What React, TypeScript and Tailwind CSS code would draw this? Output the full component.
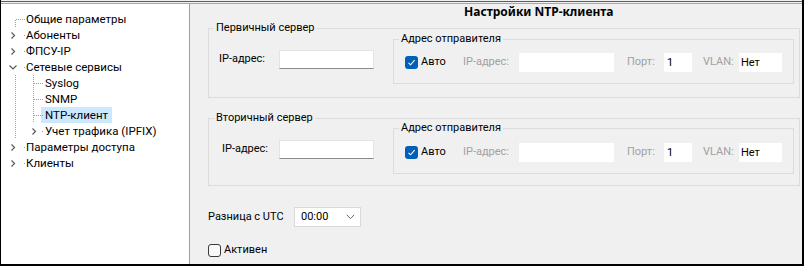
import React from "react";

const treeItems = [
  { label: "Общие параметры", level: 0 },
  { label: "Абоненты", level: 0 },
  { label: "ФПСУ-IP", level: 0 },
  { label: "Сетевые сервисы", level: 0 },
  { label: "Syslog", level: 1 },
  { label: "SNMP", level: 1 },
  { label: "NTP-клиент", level: 1, selected: true },
  { label: "Учет трафика (IPFIX)", level: 1 },
  { label: "Параметры доступа", level: 0 },
  { label: "Клиенты", level: 0 },
];

function TreeLines() {
  // drawn in page coordinates thanks to the viewBox offset
  const closed = [35, 51, 147, 163];
  return (
    <svg
      className="pointer-events-none absolute left-0 top-0"
      width="188"
      height="260"
      viewBox="1 4 188 260"
      shapeRendering="crispEdges"
    >
      <g stroke="#a0a0a0" strokeWidth="1" strokeDasharray="1 1">
        <line x1="15.5" y1="20" x2="15.5" y2="28" />
        <line x1="15.5" y1="75" x2="15.5" y2="139" />
        <line x1="16" y1="19.5" x2="25" y2="19.5" />
        <line x1="33.5" y1="75" x2="33.5" y2="123" />
        <line x1="34" y1="83.5" x2="44" y2="83.5" />
        <line x1="34" y1="99.5" x2="44" y2="99.5" />
        <line x1="34" y1="115.5" x2="44" y2="115.5" />
      </g>
      <g fill="#a0a0a0">
        {closed.concat([67]).map((y) => (
          <rect key={y} x="24" y={y} width="1" height="1" />
        ))}
        <rect x="42" y="131" width="1" height="1" />
      </g>
      <g fill="none" stroke="#5a5a5a" strokeWidth="1.2" shapeRendering="geometricPrecision">
        {closed.map((y) => (
          <path key={y} d={`M11.5 ${y - 2.5} L14.5 ${y + 0.5} L11.5 ${y + 3.5}`} />
        ))}
        <path d="M9.5 65.5 L13 69 L16.5 65.5" />
        <path d="M32.5 128.5 L35.5 131.5 L32.5 134.5" />
      </g>
    </svg>
  );
}

function BlueCheck() {
  return (
    <span className="flex h-[13px] w-[13px] shrink-0 items-center justify-center rounded-[3px] bg-[#005fb8]">
      <svg width="9" height="9" viewBox="0 0 9 9" fill="none">
        <path d="M1.5 4.8 L3.6 6.8 L7.6 2.2" stroke="#fff" strokeWidth="1.1" />
      </svg>
    </span>
  );
}

function SenderGroup({ top, rowTop }: { top: string; rowTop: string }) {
  return (
    <fieldset className={`ml-[19px] flex-1 border border-[#dcdcdc] ${top}`}>
      <legend className="ml-[5px] px-[2px] leading-4">Адрес отправителя</legend>
      <div className={`flex h-[19px] items-center pl-[11px] mb-[11px] ${rowTop}`}>
        <BlueCheck />
        <span className="ml-[3px] w-[42px]">Авто</span>
        <span className="w-[56px] text-[#a0a0a0]">IP-адрес:</span>
        <input readOnly className="h-[19px] w-[95px] bg-white outline-none" />
        <span className="ml-[13px] w-[37px] text-[#a0a0a0]">Порт:</span>
        <input readOnly defaultValue="1" className="h-[19px] w-[28px] bg-white pl-[3px] outline-none" />
        <span className="ml-[11px] w-[36px] text-[#a0a0a0]">VLAN:</span>
        <input readOnly defaultValue="Нет" className="h-[19px] w-[43px] bg-white pl-[2px] outline-none" />
      </div>
    </fieldset>
  );
}

function ServerGroup(props: {
  title: string;
  labelCls: string;
  innerTop: string;
  rowTop: string;
  bottom: string;
  cls?: string;
}) {
  return (
    <fieldset className={`min-w-0 border border-[#dcdcdc] ${props.cls ?? ""}`}>
      <legend className="ml-[5px] px-[2px] leading-4">{props.title}</legend>
      <div className={`flex items-start pl-[10px] pr-[5px] ${props.bottom}`}>
        <div className="mt-[14px] flex items-center">
          <span className={props.labelCls}>IP-адрес:</span>
          <input
            readOnly
            className="h-[19px] w-[95px] border border-[#e3e3e3] border-b-[#8a8a8a] bg-white outline-none"
          />
        </div>
        <SenderGroup top={props.innerTop} rowTop={props.rowTop} />
      </div>
    </fieldset>
  );
}

export default function App() {
  return (
    <div className="flex h-[266px] w-[804px] flex-col border-b-2 border-l border-r-2 border-black bg-[#f0f0f0] font-['Roboto',sans-serif] text-[11px] text-black">
      <div className="h-px" />
      <div className="h-px bg-[#5c5c5c]" />
      <div className="h-px" />
      <div className="h-px bg-[#a8a8a8]" />
      <div className="flex h-[260px]">
        <div className="relative w-[189px] shrink-0 border-r border-[#a0a0a0] bg-white pt-[7px] text-[11.5px]">
          <TreeLines />
          {treeItems.map((it) => (
            <div key={it.label} className={`flex h-4 items-center ${it.level === 0 ? "pl-[21px]" : "pl-[40px]"}`}>
              <span className={`px-1 leading-4 ${it.selected ? "bg-[#cce8ff]" : ""}`}>{it.label}</span>
            </div>
          ))}
        </div>
        <div className="flex flex-1 flex-col pl-[18px] pr-[2px]">
          <div className="h-4 pl-[256px] font-['Noto_Sans',sans-serif] text-[12px] font-bold leading-4">
            Настройки NTP-клиента
          </div>
          <ServerGroup
            title="Первичный сервер"
            labelCls="w-[60px]"
            innerTop="-mt-[5px]"
            rowTop="mt-[6px]"
            bottom="pb-[13px]"
          />
          <ServerGroup
            title="Вторичный сервер"
            labelCls="ml-[3px] w-[57px]"
            innerTop="-mt-[6px]"
            rowTop="mt-[7px]"
            bottom="pb-[11px]"
            cls="mt-[12px]"
          />
          <div className="mt-[21px] flex items-center">
            <span className="w-[86px]">Разница с UTC</span>
            <div className="flex h-[20px] w-[67px] items-center justify-between border border-[#d9d9d9] bg-white pl-[6px] pr-[5px]">
              <span>00:00</span>
              <svg width="9" height="6" viewBox="0 0 9 6" fill="none">
                <path d="M0.8 0.8 L4.5 4.6 L8.2 0.8" stroke="#6a6a6a" strokeWidth="1" />
              </svg>
            </div>
          </div>
          <div className="mt-[15px] flex h-4 items-center">
            <span className="h-[13px] w-[13px] rounded-[3px] border border-[#3a3a3a] bg-[#f8f8f8]" />
            <span className="ml-[3px]">Активен</span>
          </div>
        </div>
      </div>
    </div>
  );
}
